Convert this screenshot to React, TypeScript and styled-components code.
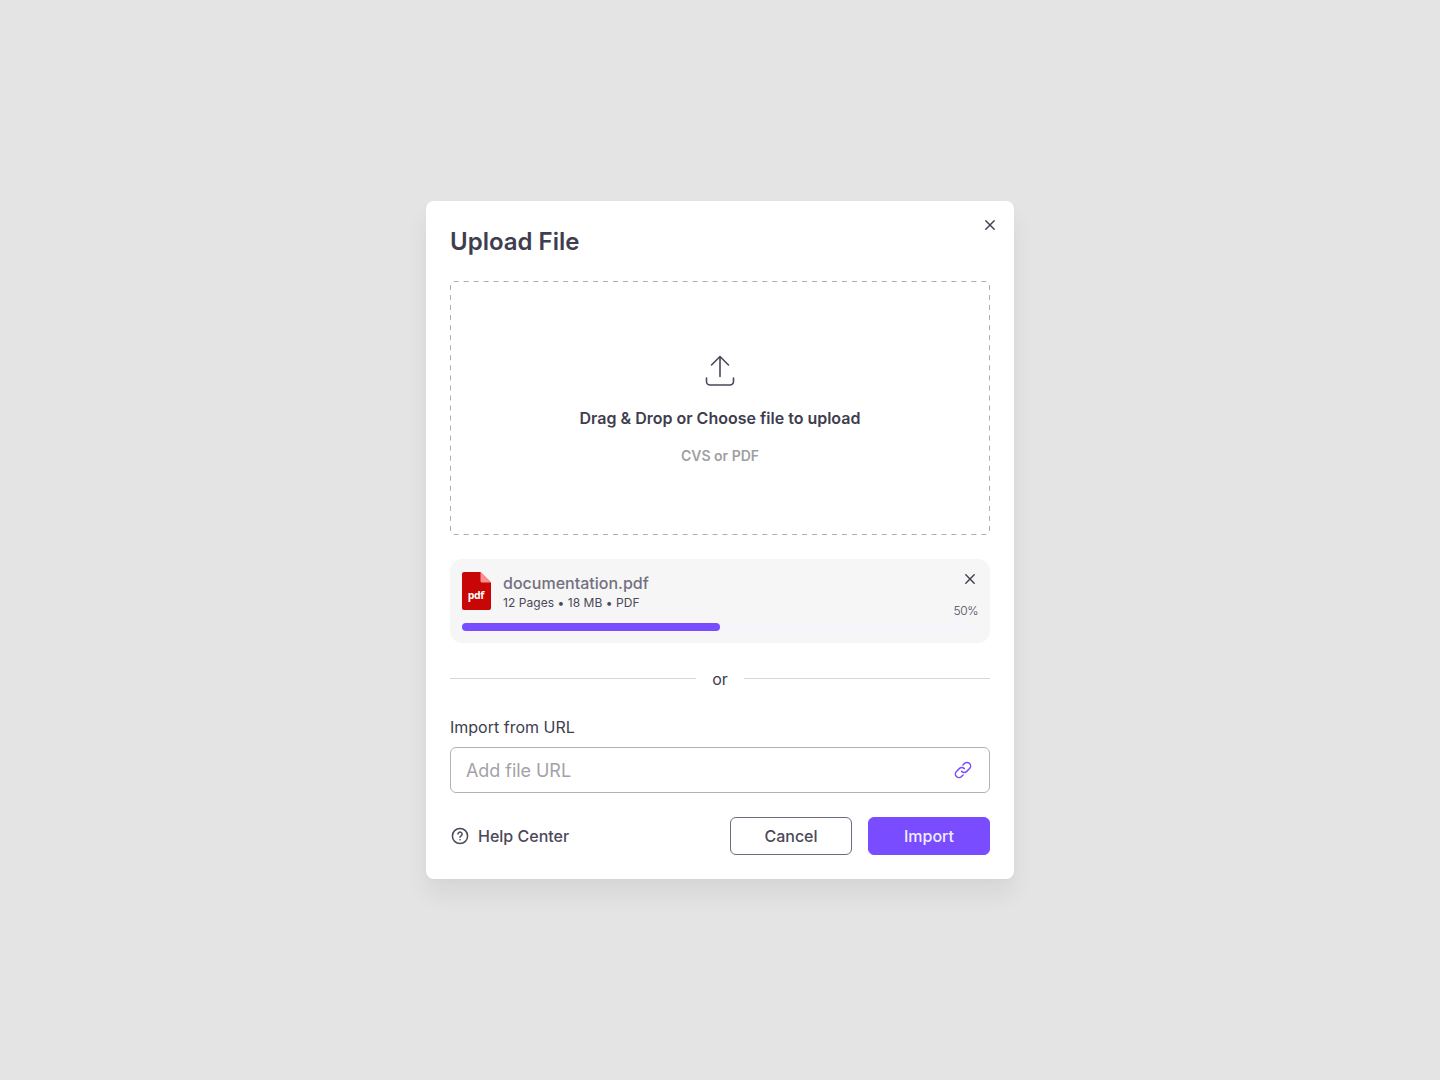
import React from 'react';
import styled, { createGlobalStyle } from 'styled-components';

const ink = '#403d4e';
const softInk = '#4b4859';

const GlobalStyle = createGlobalStyle`
  *, *::before, *::after { box-sizing: border-box; }
  body { margin: 0; background: #e4e4e4; font-family: Inter, sans-serif; color: ${ink}; }
  button, input { font-family: inherit; }
`;

const Page = styled.main`
  min-height: 100vh;
  display: flex;
  align-items: center;
  justify-content: center;
`;

const Dialog = styled.section`
  position: relative;
  width: 588px;
  padding: 24px;
  display: flex;
  flex-direction: column;
  gap: 24px;
  background: #fff;
  border-radius: 8px;
  box-shadow: 0 16px 24px rgba(0, 0, 0, 0.06), 0 2px 6px rgba(0, 0, 0, 0.02);
`;

const Title = styled.h1`
  margin: 0;
  padding-top: 2px;
  height: 32px;
  font-size: 24px;
  line-height: 30px;
  font-weight: 600;
`;

const IconButton = styled.button`
  width: 16px;
  height: 16px;
  padding: 0;
  border: 0;
  background: none;
  color: ${ink};
  display: flex;
  cursor: pointer;
`;

const DialogClose = styled(IconButton)`
  position: absolute;
  top: 16px;
  right: 16px;
`;

const DropZone = styled.div`
  position: relative;
  height: 254px;
  display: flex;
  flex-direction: column;
  align-items: center;
  justify-content: center;
  gap: 16px;
`;

const DashedOutline = styled.svg`
  position: absolute;
  inset: 0;
  width: 100%;
  height: 100%;
  pointer-events: none;
`;

const DropTitle = styled.p`
  margin: 0;
  font-size: 16px;
  line-height: 24px;
  font-weight: 600;
`;

const DropHint = styled.p`
  margin: 0;
  font-size: 14px;
  line-height: 20px;
  font-weight: 600;
  color: #9f9fa3;
`;

const FileCard = styled.div`
  height: 84px;
  padding: 12px;
  display: flex;
  flex-direction: column;
  justify-content: space-between;
  background: #f6f6f6;
  border-radius: 12px;
`;

const FileRow = styled.div`
  height: 48px;
  display: flex;
  gap: 12px;
`;

const PdfIcon = styled.svg`
  display: block;
  margin-top: 1px;
  flex: none;
`;

const FileText = styled.div`
  flex: 1;
  display: flex;
  flex-direction: column;
`;

const FileName = styled.span`
  font-size: 16px;
  line-height: 24px;
  font-weight: 500;
  color: #737080;
`;

const FileMeta = styled.span`
  font-size: 12px;
  line-height: 16px;
  letter-spacing: 0.05px;
  color: ${softInk};
`;

const FileSide = styled.div`
  display: flex;
  flex-direction: column;
  align-items: flex-end;
  justify-content: space-between;
`;

const Percent = styled.span`
  font-size: 12px;
  line-height: 16px;
  font-weight: 300;
  letter-spacing: -0.4px;
  color: ${softInk};
`;

const Track = styled.div`
  height: 8px;
  border-radius: 4px;
  background: #f6f5fc;
`;

const Fill = styled.div`
  height: 100%;
  border-radius: 4px;
  background: #794dff;
`;

const Divider = styled.div`
  height: 24px;
  display: flex;
  align-items: center;
  gap: 16px;
  font-size: 16px;
  line-height: 24px;
`;

const Rule = styled.span`
  flex: 1;
  height: 1px;
  margin-bottom: 1px;
  background: #d7d7da;
`;

const Field = styled.label`
  display: flex;
  flex-direction: column;
  gap: 8px;
  font-size: 16px;
  line-height: 24px;
`;

const InputBox = styled.span`
  height: 46px;
  padding: 0 17px 0 15px;
  display: flex;
  align-items: center;
  border: 1px solid #b3b1b8;
  border-radius: 6px;
`;

const UrlInput = styled.input`
  flex: 1;
  min-width: 0;
  padding: 2px 0 0;
  border: 0;
  outline: 0;
  background: none;
  font-size: 18px;
  line-height: 24px;
  letter-spacing: -0.05px;
  color: ${ink};
  &::placeholder { color: #a3a2a8; opacity: 1; }
`;

const Footer = styled.footer`
  display: flex;
  align-items: center;
  gap: 16px;
`;

const Help = styled.a`
  margin-right: auto;
  display: flex;
  align-items: center;
  gap: 8px;
  font-size: 16px;
  line-height: 24px;
  font-weight: 500;
  color: ${softInk};
`;

const Button = styled.button<{ $primary?: boolean }>`
  width: 122px;
  height: 38px;
  padding: 0;
  font-size: 16px;
  line-height: 24px;
  font-weight: 500;
  border-radius: 6px;
  border: 1px solid ${(p) => (p.$primary ? '#794dff' : '#6e6b7b')};
  background: ${(p) => (p.$primary ? '#794dff' : '#fff')};
  color: ${(p) => (p.$primary ? '#f1edff' : softInk)};
`;

const Cross = () => (
  <svg width="16" height="16" viewBox="0 0 16 16" fill="none" stroke="currentColor" strokeWidth="1.4" strokeLinecap="round">
    <path d="M3.8 3.8l8.4 8.4M12.2 3.8l-8.4 8.4" />
  </svg>
);

const UploadIcon = () => (
  <svg width="40" height="40" viewBox="0 0 40 40" fill="none" stroke={softInk} strokeWidth="1.6" strokeLinecap="round" strokeLinejoin="round">
    <path d="M20 26.5V6.5M11.5 15L20 6.5l8.5 8.5M6.5 28v3.5a3.5 3.5 0 0 0 3.5 3.5h20a3.5 3.5 0 0 0 3.5-3.5V28" />
  </svg>
);

const LinkIcon = () => (
  <svg width="18" height="18" viewBox="0 0 18 18" fill="none" stroke="#794dff" strokeWidth="1.5" strokeLinecap="round" strokeLinejoin="round">
    <path d="M7.65 10.35a3.6 3.6 0 0 0 5.1 0l2.8-2.8a3.6 3.6 0 0 0-5.1-5.1L8.9 4" />
    <path d="M10.35 7.65a3.6 3.6 0 0 0-5.1 0l-2.8 2.8a3.6 3.6 0 0 0 5.1 5.1L9.1 14" />
  </svg>
);

const HelpIcon = () => (
  <svg width="20" height="20" viewBox="0 0 20 20" fill="none" stroke={softInk} strokeWidth="1.5" strokeLinecap="round" strokeLinejoin="round">
    <circle cx="10" cy="10" r="7.6" />
    <path d="M8 8.1a2.05 2.05 0 1 1 3.1 1.75c-.7.4-1.1.8-1.1 1.4" />
    <circle cx="10" cy="13.7" r=".8" fill={softInk} stroke="none" />
  </svg>
);

const progress = 50;

export default function App() {
  return (
    <Page>
      <GlobalStyle />
      <Dialog>
        <Title>Upload File</Title>
        <DialogClose aria-label="Close"><Cross /></DialogClose>
        <DropZone>
          <DashedOutline viewBox="0 0 540 254" fill="none" stroke="#aeacb5">
            <path d="M3.7 .5H536.3M3.7 253.5H536.3" strokeDasharray="5 4.955" />
            <path d="M.5 4V250M539.5 4V250" strokeDasharray="5 5.04" />
            <path d="M.9 3Q1.4 1.4 3 .9M539.1 3Q538.6 1.4 537 .9M.9 251Q1.4 252.6 3 253.1M539.1 251Q538.6 252.6 537 253.1" strokeOpacity="0.2" />
          </DashedOutline>
          <UploadIcon />
          <DropTitle>Drag &amp; Drop or Choose file to upload</DropTitle>
          <DropHint>CVS or PDF</DropHint>
        </DropZone>
        <FileCard>
          <FileRow>
            <PdfIcon width="29" height="38" viewBox="0 0 29 38">
              <path d="M2 0h16.5L29 10.5V36a2 2 0 0 1-2 2H2a2 2 0 0 1-2-2V2a2 2 0 0 1 2-2z" fill="#c90606" />
              <path d="M18.5 0L29 10.5h-9a1.5 1.5 0 0 1-1.5-1.5z" fill="#ff8f8f" />
              <text x="14" y="27" textAnchor="middle" fill="#fff" fontFamily="'Open Sans', sans-serif" fontSize="10.5" fontWeight="700" textLength="16.5">pdf</text>
            </PdfIcon>
            <FileText>
              <FileName>documentation.pdf</FileName>
              <FileMeta>12 Pages • 18 MB • PDF</FileMeta>
            </FileText>
            <FileSide>
              <IconButton aria-label="Remove file"><Cross /></IconButton>
              <Percent>{progress}%</Percent>
            </FileSide>
          </FileRow>
          <Track><Fill style={{ width: `${progress}%` }} /></Track>
        </FileCard>
        <Divider><Rule />or<Rule /></Divider>
        <Field>
          Import from URL
          <InputBox>
            <UrlInput placeholder="Add file URL" />
            <LinkIcon />
          </InputBox>
        </Field>
        <Footer>
          <Help><HelpIcon />Help Center</Help>
          <Button>Cancel</Button>
          <Button $primary>Import</Button>
        </Footer>
      </Dialog>
    </Page>
  );
}
